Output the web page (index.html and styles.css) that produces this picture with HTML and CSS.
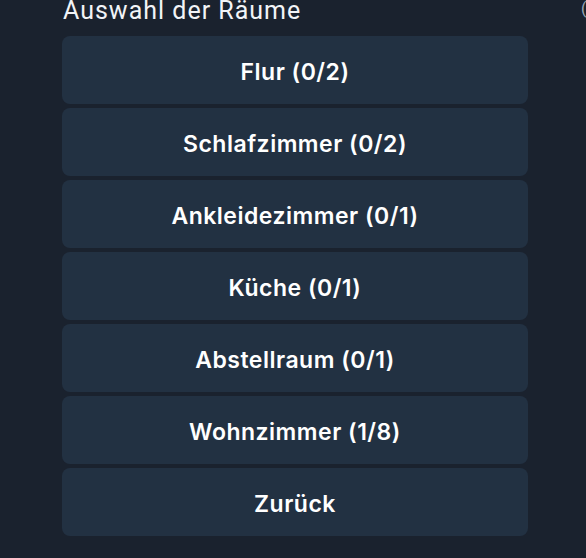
FILE: index.html
```html
<!DOCTYPE html>
<html lang="de">
<head>
    <meta charset="UTF-8">
    <meta name="viewport" content="width=device-width, initial-scale=1.0">
    <title>Auswahl der Räume</title>
    <link rel="stylesheet" href="styles.css">
</head>
<body>
    <main class="panel">
        <div class="header">
            <h2 class="title">Auswahl der Räume</h2>
            <span class="side-note">(0/15)</span>
        </div>
        <div class="room-list">
            <button class="room-button">Flur (0/2)</button>
            <button class="room-button">Schlafzimmer (0/2)</button>
            <button class="room-button">Ankleidezimmer (0/1)</button>
            <button class="room-button">Küche (0/1)</button>
            <button class="room-button">Abstellraum (0/1)</button>
            <button class="room-button">Wohnzimmer (1/8)</button>
            <button class="room-button">Zurück</button>
        </div>
    </main>
</body>
</html>
```

FILE: styles.css
```css
html, body {
    margin: 0;
    padding: 0;
    height: 100%;
    overflow: hidden;
    background-color: #1a222e;
}

body {
    font-family: Inter, "Noto Sans", sans-serif;
    color: #ffffff;
}

.panel {
    width: 466px;
    padding: 0 0 0 62px;
}

.header {
    position: relative;
    height: 36px;
}

.title {
    margin: 0;
    font-family: Roboto, sans-serif;
    font-weight: 400;
    font-size: 25px;
    line-height: 25px;
    letter-spacing: 1px;
    color: #f2f4f7;
    position: relative;
    top: -2px;
    left: 1px;
}

.side-note {
    position: absolute;
    left: 519px;
    top: -1px;
    font-family: Roboto, sans-serif;
    font-size: 16px;
    color: #9aa8ba;
    white-space: nowrap;
}

.room-list {
    display: flex;
    flex-direction: column;
    gap: 4px;
}

.room-button {
    height: 68px;
    width: 100%;
    padding: 3px 0 0;
    border: none;
    border-radius: 8px;
    background-color: #223142;
    color: #ffffff;
    font-family: Inter, "Noto Sans", sans-serif;
    font-weight: 600;
    font-size: 23px;
    letter-spacing: 0.5px;
    cursor: pointer;
}
```
